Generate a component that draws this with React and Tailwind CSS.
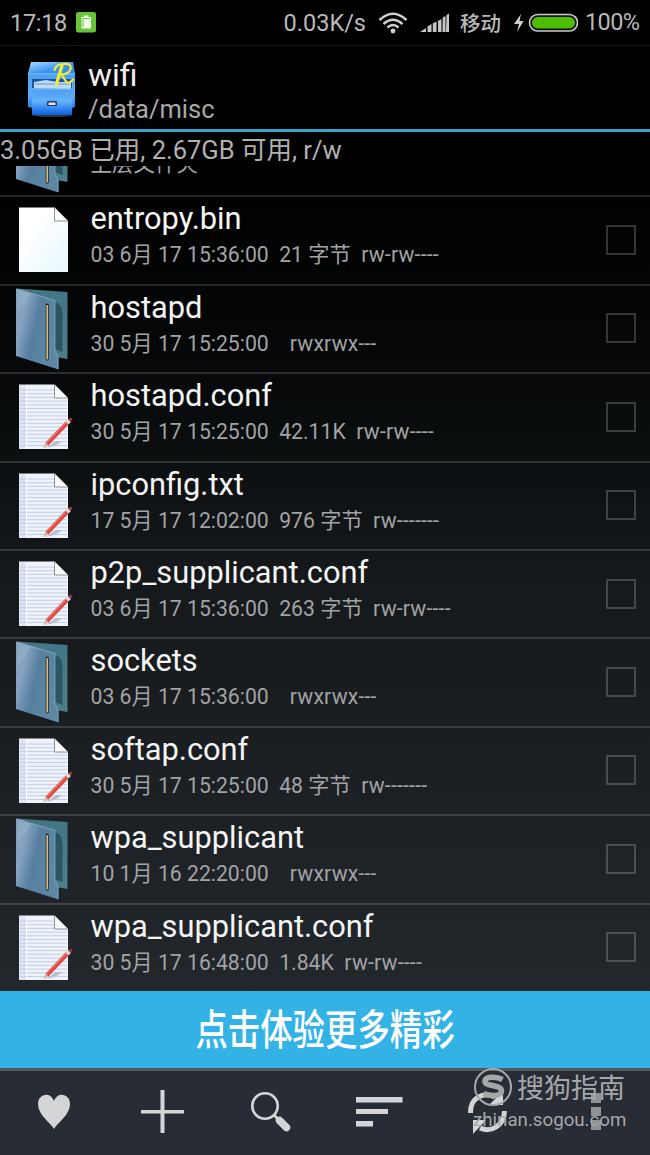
const files = [
  { name: "entropy.bin", kind: "bin", date: "03 6月 17 15:36:00", size: "21 字节", mode: "rw-rw----" },
  { name: "hostapd", kind: "folder", date: "30 5月 17 15:25:00", size: "", mode: "rwxrwx---" },
  { name: "hostapd.conf", kind: "text", date: "30 5月 17 15:25:00", size: "42.11K", mode: "rw-rw----" },
  { name: "ipconfig.txt", kind: "text", date: "17 5月 17 12:02:00", size: "976 字节", mode: "rw-------" },
  { name: "p2p_supplicant.conf", kind: "text", date: "03 6月 17 15:36:00", size: "263 字节", mode: "rw-rw----" },
  { name: "sockets", kind: "folder", date: "03 6月 17 15:36:00", size: "", mode: "rwxrwx---" },
  { name: "softap.conf", kind: "text", date: "30 5月 17 15:25:00", size: "48 字节", mode: "rw-------" },
  { name: "wpa_supplicant", kind: "folder", date: "10 1月 16 22:20:00", size: "", mode: "rwxrwx---" },
  { name: "wpa_supplicant.conf", kind: "text", date: "30 5月 17 16:48:00", size: "1.84K", mode: "rw-rw----" },
];

function FolderIcon() {
  return (
    <svg width="80" height="88" viewBox="0 0 80 88" className="block">
      <defs>
        <linearGradient id="front" x1="0" y1="0" x2="1" y2="0.45">
          <stop offset="0" stopColor="#7f9dba" />
          <stop offset="0.25" stopColor="#86a4c2" />
          <stop offset="0.55" stopColor="#577f9f" />
          <stop offset="1" stopColor="#5c88a5" />
        </linearGradient>
        <linearGradient id="back" x1="0" y1="0" x2="0" y2="1">
          <stop offset="0" stopColor="#427685" />
          <stop offset="1" stopColor="#4d7e8c" />
        </linearGradient>
      </defs>
      <path d="M17 4.500 L67.500 8 V75 L56 73 L40 20z" fill="url(#back)" />
      <path d="M55 18 Q62 20 62.500 29 V68 L55 65z" fill="#2b5661" />
      <path d="M16 4.500 L55 16 V67 L58.500 73 V85.500 L16 72z" fill="url(#front)" />
      <path d="M17 5.500 L31 9.500 L17 30z" fill="#a4bdd0" opacity="0.3" />
      <path d="M16.500 5 L55 16.500 V67 L58 73 V85" fill="none" stroke="#8bb0c4" strokeWidth="0.7" />
      <rect x="45.700" y="19.500" width="3" height="57" rx="1.500" fill="#13191b" />
      <path d="M47.200 21 V75.500" stroke="#d6b77c" strokeWidth="1.700" />
    </svg>
  );
}

function FileIcon({ lined }) {
  return (
    <svg width="80" height="88" viewBox="0 0 80 88" className="block">
      <defs>
        <linearGradient id="paper" x1="0" y1="0" x2="1" y2="1">
          <stop offset="0.3" stopColor="#ffffff" />
          <stop offset="1" stopColor="#e6f8ff" />
        </linearGradient>
      </defs>
      <path d="M19 12.500 H54.500 L68 26 V77 H19z" fill={lined ? "#eff3fb" : "url(#paper)"} />
      {lined && (
        <>
          <path d="M19 13 H26 V77 H19z" fill="#e0e5f3" />
          {[...Array(16)].map((_, i) => (
            <path key={i} d={`M20 ${18 + i * 3.7} H${i < 3 ? 54 : 67}`} stroke="#bdc8de" strokeWidth="0.9" />
          ))}
          <path d="M26.500 13 V77" stroke="#fafbff" strokeWidth="1" />
        </>
      )}
      <path d="M54.500 12.500 L68 26 H54.500z" fill="#fafafa" stroke="#777" strokeWidth="0.8" />
      <path d="M55 13 L67.500 25.500" stroke="#bbb" strokeWidth="0.8" />
      {lined && (
        <>
          <path d="M46 76 Q58 74 62 69 L56 69z" fill="#b9bfce" />
          <path d="M43 76.500 L45.500 70.500 L48.500 73.500z" fill="#d2b9ad" />
          <path d="M47 72 L68 50" stroke="#dc4a41" strokeWidth="4" />
          <path d="M46.500 71 L67.500 49" stroke="#f58a7c" strokeWidth="1" />
          <path d="M67 51 L69.500 48.500" stroke="#d8d6dc" strokeWidth="4" />
          <path d="M70 48 L71.500 46.500" stroke="#c9372f" strokeWidth="3" />
        </>
      )}
    </svg>
  );
}

function AppIcon() {
  return (
    <svg width="52" height="60" viewBox="0 0 52 60" className="block">
      <defs>
        <linearGradient id="cabinet" x1="0" y1="0" x2="0" y2="1">
          <stop offset="0" stopColor="#4b9df3" />
          <stop offset="0.5" stopColor="#61b1fa" />
          <stop offset="1" stopColor="#0c5fe2" />
        </linearGradient>
        <linearGradient id="lid" x1="0" y1="0" x2="1" y2="1">
          <stop offset="0" stopColor="#a9dcff" />
          <stop offset="0.6" stopColor="#3e95ef" />
          <stop offset="1" stopColor="#3286e4" />
        </linearGradient>
      </defs>
      <ellipse cx="26" cy="57" rx="20" ry="2" fill="#333" />
      <path d="M5 4 H47 L49 15 H2z" fill="url(#lid)" />
      <path d="M2 15 H49 V49 L46 50 V57 H6 V50 L2 49z" fill="url(#cabinet)" />
      <path d="M6 21 H46 V31 H6z" fill="#1e5299" />
      <path d="M8 24 L20 22 L31 24 H45 V31 H8z" fill="#bcd9f6" />
      <path d="M9 26 H44" stroke="#7595bd" />
      <path d="M6 30 L47 31 L46 57 H6z" fill="url(#cabinet)" />
      <path d="M6 31 H47 M2.500 16 H48.500" stroke="#8dc7fc" strokeWidth="0.8" />
      <rect x="21" y="43" width="10" height="5" rx="1" fill="#263a61" />
      <rect x="22.500" y="44.500" width="7" height="2.500" fill="#d9e7f5" />
      <circle cx="41.500" cy="36" r="1" fill="#bda875" />
      <g fill="none" stroke="#f3ee2e" strokeLinecap="round" strokeLinejoin="round">
        <path d="M36 8 Q33 17 30.500 26" strokeWidth="3.200" />
        <path d="M28.500 12 Q30 6 38 6 Q46 5.500 44.500 11 Q43 16 35.500 16.500 L40 23.500 Q43 26.500 47 21.500" strokeWidth="2.200" />
      </g>
    </svg>
  );
}

function StatusBar() {
  return (
    <div className="flex h-[46px] shrink-0 items-center border-b border-[#141414] bg-black pl-[10px] text-[23.500px] text-[#b9b9b9]">
      <span className="w-[66px] pt-[2px] tracking-[-0.3px]">17:18</span>
      <svg width="21" height="21" viewBox="0 0 21 21">
        <rect width="20" height="20.500" rx="2.500" fill="#68c43a" />
        <path d="M5.500 5 H8 V3.500 H12.500 V5 H15 V16.500 H5.500z" fill="#eefbe6" />
        <path d="M7 15 V6.500 H13.500" fill="none" stroke="#68c43a" />
      </svg>
      <span className="ml-auto mr-[12px] pt-[2px]">0.03K/s</span>
      <svg width="30" height="22" viewBox="0 0 30 22" fill="none" stroke="#d0d0d0" strokeWidth="2.500">
        <path d="M1.500 8 Q15 -4.500 28.500 8" />
        <path d="M5.500 12 Q15 3.500 24.500 12" />
        <path d="M9.500 15.500 Q15 10.500 20.500 15.500" />
        <circle cx="15" cy="19" r="2.400" fill="#d0d0d0" stroke="none" />
      </svg>
      <svg width="29" height="20" viewBox="0 0 29 20" className="ml-[12px] mr-[11px]" fill="#c6c6c6">
        <path d="M0 19 L6 15 V19z M7.500 13.500 L11.500 11 V19 H7.500z M12.800 10.500 L16.500 8.500 V19 H12.800z M18 8 L21.500 6 V19 H18z M22.700 4.500 L25.500 3 V19 H22.500z M26.500 2 L29 0.500 V19 H26z" />
      </svg>
      <span className="mr-[13px] pt-[3px] text-[20.500px] font-medium">移动</span>
      <svg width="64" height="20" viewBox="0 0 64 20" className="mr-[7px]">
        <path d="M7 1 L0 11 H5 L3 19 L9.500 8 H5.500z" fill="#d0d0d0" />
        <rect x="15.500" y="1.500" width="48" height="16.500" rx="8.200" fill="#111" stroke="#c9c9c9" strokeWidth="1.600" />
        <rect x="18" y="4" width="43" height="11.500" rx="5.700" fill="#4ebd06" />
      </svg>
      <span className="w-[65px] tracking-[-0.6px]">100%</span>
    </div>
  );
}

function FileRow({ file }) {
  return (
    <div className="flex h-[88.400px] shrink-0 border-t-2 border-white/15">
      <div className="-mt-[2px] w-[90.500px] shrink-0">
        {file.kind === "folder" ? <FolderIcon /> : <FileIcon lined={file.kind === "text"} />}
      </div>
      <div className="min-w-0 flex-1 whitespace-pre pt-[3px]">
        <div className="text-[30.800px] leading-[38px] text-[#f5f5f5]">{file.name}</div>
        <div className="text-[21.200px] leading-[33px] text-[#a2a3a5]">
          {file.date + "  " + file.size + "  "}
          <span className="tracking-[0.200px]">{file.mode}</span>
        </div>
      </div>
      <div className="mr-[14px] mt-[27.500px] h-[30px] w-[30px] border-2 border-white/20" />
    </div>
  );
}

function Watermark() {
  return (
    <div className="absolute left-[473px] top-[1067px] text-[#a5a7ab]">
      <div className="flex items-center">
        <svg width="40" height="40" viewBox="0 0 40 40" fill="none" stroke="#a5a7ab">
          <circle cx="20" cy="19" r="18" strokeWidth="2" />
          <path d="M29.500 11.500 C24 8.500 12 8 12 13.500 C12 19 28.500 16 28.500 23 C28.500 29 16 28 10.500 25.500" strokeWidth="5.500" />
        </svg>
        <span className="ml-[4px] mt-[2px] text-[27px] leading-[40px]">搜狗指南</span>
      </div>
      <div className="-mt-[3px] text-[18.700px] leading-[28px]">zhinan.sogou.com</div>
    </div>
  );
}

function BottomBar() {
  return (
    <div className="flex h-[87px] shrink-0 border-t-[3px] border-[#55595e] bg-[#282c34]">
      <svg width="650" height="84" viewBox="0 0 650 84" fill="#d3d5d7">
        <path d="M54 58 C50 51 38 44 38 33 C38 23 50 20 54 30 C58 20 70 23 70 33 C70 44 58 51 54 58z" />
        <path d="M160.500 19 H164.500 V39 H184 V42.500 H164.500 V62 H160.500 V42.500 H141 V39 H160.500z" />
        <circle cx="265" cy="35" r="12.700" fill="none" stroke="#d3d5d7" strokeWidth="2.600" />
        <path d="M274 44 L278 48" stroke="#d3d5d7" strokeWidth="3" />
        <path d="M279.500 49.500 L286.500 56.500" stroke="#d3d5d7" strokeWidth="7.500" strokeLinecap="round" />
        <path d="M356 26 H402.500 V31.500 H356z M356 38 H388 V43 H356z M356 50 H373 V55.500 H356z" />
        <g fill="none" stroke="#d3d5d7" strokeWidth="5">
          <path d="M470.500 42 C470 27 483 20 495 26" />
          <path d="M504.500 40 C504 55 491 62 480 57" />
        </g>
        <path d="M503 20 V34 H489z M473 49 H486 L473 63z" />
        <path d="M591 22 H601 V32 H591z M591 36 H601 V45 H591z M591 49 H601 V59 H591z" fill="#8f9296" />
      </svg>
    </div>
  );
}

export default function App() {
  return (
    <div className="relative flex h-[1155px] w-[650px] flex-col overflow-hidden bg-linear-to-b from-black via-[#15191b] to-[#282d34] font-['Roboto','Noto_Sans_CJK_SC',sans-serif]">
      <StatusBar />
      <div className="flex h-[86px] shrink-0 border-b-[3px] border-[#38a7cf] pl-[26px]">
        <div className="mt-[12px] w-[62px]">
          <AppIcon />
        </div>
        <div className="pt-[11px]">
          <div className="text-[32px] leading-[36px] text-[#f0f0f0]">wifi</div>
          <div className="text-[25.500px] leading-[33px] text-[#a9a9a9]">/data/misc</div>
        </div>
      </div>
      <div className="h-[34px] shrink-0 whitespace-pre text-[25.500px] leading-[37px] text-[#b0b0b0]">
        3.05GB 已用, 2.67GB 可用, r/w
      </div>
      {/* the list is scrolled, so the parent folder row is only partly visible */}
      <div className="flex h-[825px] shrink-0 flex-col justify-end overflow-hidden">
        <div className="flex h-[88.400px] shrink-0">
          <div className="w-[90.500px]">
            <FolderIcon />
          </div>
          <div className="pt-[41px] text-[21.500px] leading-[32px] text-[#a2a3a5]">上层文件夹</div>
        </div>
        {files.map((file) => (
          <FileRow key={file.name} file={file} />
        ))}
      </div>
      <div className="flex h-[77px] shrink-0 items-center justify-center bg-[#33b3e5] pt-[3px] text-white">
        <span className="scale-y-[1.300] text-[32.400px] font-medium leading-none">点击体验更多精彩</span>
      </div>
      <BottomBar />
      <Watermark />
    </div>
  );
}
